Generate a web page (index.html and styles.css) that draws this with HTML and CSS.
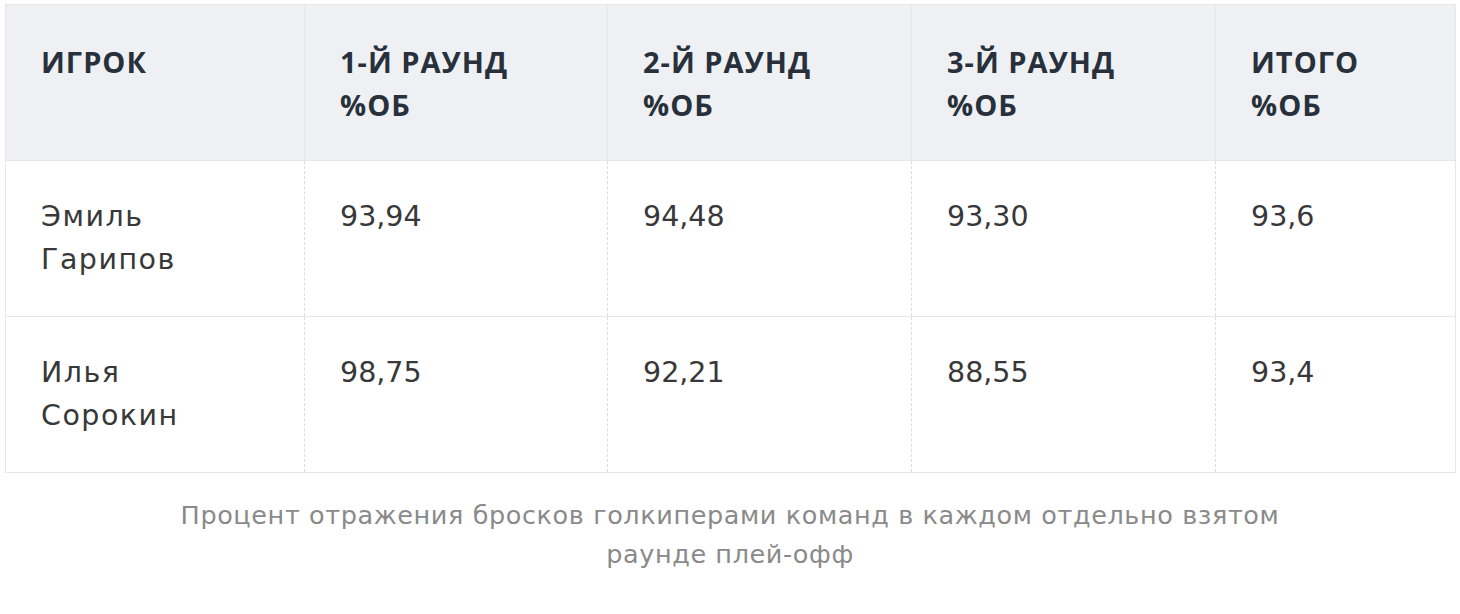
FILE: index.html
```html
<!DOCTYPE html>
<html lang="ru">
<head>
<meta charset="utf-8">
<link rel="stylesheet" href="styles.css">
</head>
<body>
<div class="wrap">
  <table class="stats">
    <colgroup>
      <col class="c1"><col class="c2"><col class="c3"><col class="c4"><col class="c5">
    </colgroup>
    <thead>
      <tr>
        <th>ИГРОК</th>
        <th>1-Й РАУНД<br>%ОБ</th>
        <th>2-Й РАУНД<br>%ОБ</th>
        <th>3-Й РАУНД<br>%ОБ</th>
        <th>ИТОГО<br>%ОБ</th>
      </tr>
    </thead>
    <tbody>
      <tr>
        <td class="name">Эмиль<br>Гарипов</td>
        <td>93,94</td>
        <td>94,48</td>
        <td>93,30</td>
        <td>93,6</td>
      </tr>
      <tr>
        <td class="name">Илья<br>Сорокин</td>
        <td>98,75</td>
        <td>92,21</td>
        <td>88,55</td>
        <td>93,4</td>
      </tr>
    </tbody>
  </table>
  <p class="caption">Процент отражения бросков голкиперами команд в каждом отдельно взятом<br>раунде плей-офф</p>
</div>
</body>
</html>
```

FILE: styles.css
```css
html, body {
  margin: 0;
  padding: 0;
  background: #ffffff;
}
.wrap {
  padding: 4px 5px 0 5px;
  width: 1450px;
}
.stats {
  width: 1450px;
  border-collapse: collapse;
  table-layout: fixed;
  border: 1px solid #e6e7e9;
}
.c1 { width: 299px; }
.c2 { width: 303px; }
.c3 { width: 304px; }
.c4 { width: 304px; }
.c5 { width: 240px; }
.stats th,
.stats td {
  text-align: left;
  vertical-align: top;
  padding: 35px 28px 34px 35px;
  line-height: 43px;
  height: 86px;
}
.stats th {
  font-family: "Open Sans", "Liberation Sans", sans-serif;
  font-size: 29px;
  letter-spacing: 1px;
  background: #eef0f3;
  color: #27303b;
  font-weight: 700;
  border-left: 1px solid #e4e6ea;
}
.stats td {
  font-family: "DejaVu Sans", "Open Sans", sans-serif;
  font-size: 28.5px;
  color: #383838;
  font-weight: 400;
  padding-top: 34px;
  padding-bottom: 35px;
  padding-left: 35px;
  border-top: 1px solid #e6e7e9;
  border-left: 1px dashed #dcdcdc;
}
.stats td.name {
  letter-spacing: 1.5px;
}
.stats th:first-child,
.stats td:first-child {
  border-left: 1px solid #e6e7e9;
}
.caption {
  margin: 23px 0 0 0;
  text-align: center;
  font-family: "DejaVu Sans", "Open Sans", sans-serif;
  font-size: 25.5px;
  letter-spacing: 0.6px;
  line-height: 39px;
  color: #8a8a8a;
}
```
